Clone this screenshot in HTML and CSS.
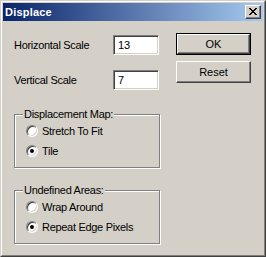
FILE: index.html
```html
<!DOCTYPE html>
<html>
<head>
<meta charset="utf-8">
<link rel="stylesheet" href="styles.css">
</head>
<body>
<div class="window">
  <div class="frame">
    <div class="titlebar">
      <span class="title">Displace</span>
      <span class="close">
        <svg width="8" height="7" viewBox="0 0 8 7" shape-rendering="crispEdges"><path fill="#000" d="M0 0h2v1H0z M6 0h2v1H6z M1 1h2v1H1z M5 1h2v1H5z M2 2h4v1H2z M3 3h2v1H3z M2 4h4v1H2z M1 5h2v1H1z M5 5h2v1H5z M0 6h2v1H0z M6 6h2v1H6z"/></svg>
      </span>
    </div>
    <div class="client">
      <div class="left">
        <div class="field">
          <span class="label">Horizontal Scale</span>
          <span class="input">13</span>
        </div>
        <div class="field second">
          <span class="label">Vertical Scale</span>
          <span class="input">7</span>
        </div>
        <div class="group first">
          <span class="legend">Displacement Map:</span>
          <div class="radio-row"><span class="radio"></span><span class="rtext">Stretch To Fit</span></div>
          <div class="radio-row"><span class="radio checked"></span><span class="rtext">Tile</span></div>
        </div>
        <div class="group second-group">
          <span class="legend">Undefined Areas:</span>
          <div class="radio-row"><span class="radio"></span><span class="rtext">Wrap Around</span></div>
          <div class="radio-row"><span class="radio checked"></span><span class="rtext">Repeat Edge Pixels</span></div>
        </div>
      </div>
      <div class="right">
        <div class="btn default"><span class="btn-inner">OK</span></div>
        <div class="btn reset"><span class="btn-inner">Reset</span></div>
      </div>
    </div>
  </div>
</div>
</body>
</html>
```
FILE: styles.css
```css
html, body {
  margin: 0;
  padding: 0;
  background: #d4d0c8;
}
body {
  font-family: "Liberation Sans", Arial, sans-serif;
  font-size: 11px;
  color: #000;
}
.window {
  width: 266px;
  height: 257px;
  box-sizing: border-box;
  border: 1px solid;
  border-color: #d4d0c8 #404040 #404040 #d4d0c8;
  background: #d4d0c8;
}
.frame {
  height: 100%;
  box-sizing: border-box;
  border: 1px solid;
  border-color: #fff #808080 #808080 #fff;
  padding: 1px;
}
.titlebar {
  height: 18px;
  background: linear-gradient(to right, #0a246a, #a6caf0);
  display: flex;
  align-items: center;
  justify-content: space-between;
  padding: 0 2px 0 2px;
}
.title {
  color: #fff;
  font-weight: bold;
  font-size: 11px;
  line-height: 18px;
  letter-spacing: 0.2px;
}
.close {
  width: 16px;
  height: 14px;
  box-sizing: border-box;
  background: #d4d0c8;
  border: 1px solid;
  border-color: #fff #404040 #404040 #fff;
  box-shadow: inset -1px -1px 0 #808080;
  display: flex;
  align-items: center;
  justify-content: center;
  padding: 0 1px 1px 0;
}
.close svg { display: block; }
.client {
  display: flex;
  padding: 14px 0 0 11px;
  gap: 15px;
}
.left {
  width: 147px;
}
.field {
  display: flex;
  align-items: center;
  height: 20px;
}
.field.second {
  margin-top: 15px;
}
.label {
  width: 99px;
  letter-spacing: -0.3px;
}
.input {
  width: 46px;
  height: 20px;
  box-sizing: border-box;
  background: #fff;
  border: 1px solid;
  border-color: #808080 #fff #fff #808080;
  box-shadow: inset 1px 1px 0 #404040, inset -1px -1px 0 #d4d0c8;
  padding: 0 0 0 4px;
  line-height: 18px;
}
.group {
  width: 146px;
  box-sizing: border-box;
  border: 1px solid #808080;
  box-shadow: 1px 1px 0 #fff, inset 1px 1px 0 #fff;
  padding: 1px 0 6px 11px;
}
.group.first {
  margin-top: 24px;
  height: 54px;
}
.group.second-group {
  margin-top: 22px;
  height: 54px;
}
.legend {
  display: block;
  width: max-content;
  margin: -8px 0 0 -3px;
  padding: 0 1px;
  background: #d4d0c8;
  line-height: 13px;
  letter-spacing: -0.3px;
}
.radio-row {
  display: flex;
  align-items: center;
  height: 20px;
  gap: 4px;
}
.radio-row:first-of-type { }
.group .legend + .radio-row {
  margin-top: 0;
}
.radio {
  position: relative;
  width: 12px;
  height: 12px;
  box-sizing: border-box;
  border-radius: 50%;
  background: #fff;
  border: 1px solid;
  border-color: #808080 #fff #fff #808080;
  box-shadow: inset 1px 1px 0 #404040, inset -1px -1px 0 #d4d0c8;
}
.radio.checked::after {
  content: "";
  position: absolute;
  left: 3px;
  top: 3px;
  width: 4px;
  height: 4px;
  border-radius: 50%;
  background: #000;
}
.rtext {
  letter-spacing: -0.3px;
}
.right {
  display: flex;
  flex-direction: column;
  gap: 6px;
  padding-top: -2px;
  margin-top: -2px;
}
.btn {
  width: 75px;
  height: 22px;
  box-sizing: border-box;
  background: #d4d0c8;
  display: flex;
}
.btn.default {
  border: 1px solid #000;
}
.btn-inner {
  flex: 1;
  display: flex;
  align-items: center;
  justify-content: center;
  border: 1px solid;
  border-color: #fff #404040 #404040 #fff;
  box-shadow: inset -1px -1px 0 #808080;
}
.btn.reset .btn-inner {
  box-shadow: inset -1px -1px 0 #808080, inset 1px 1px 0 #d4d0c8;
}
```
